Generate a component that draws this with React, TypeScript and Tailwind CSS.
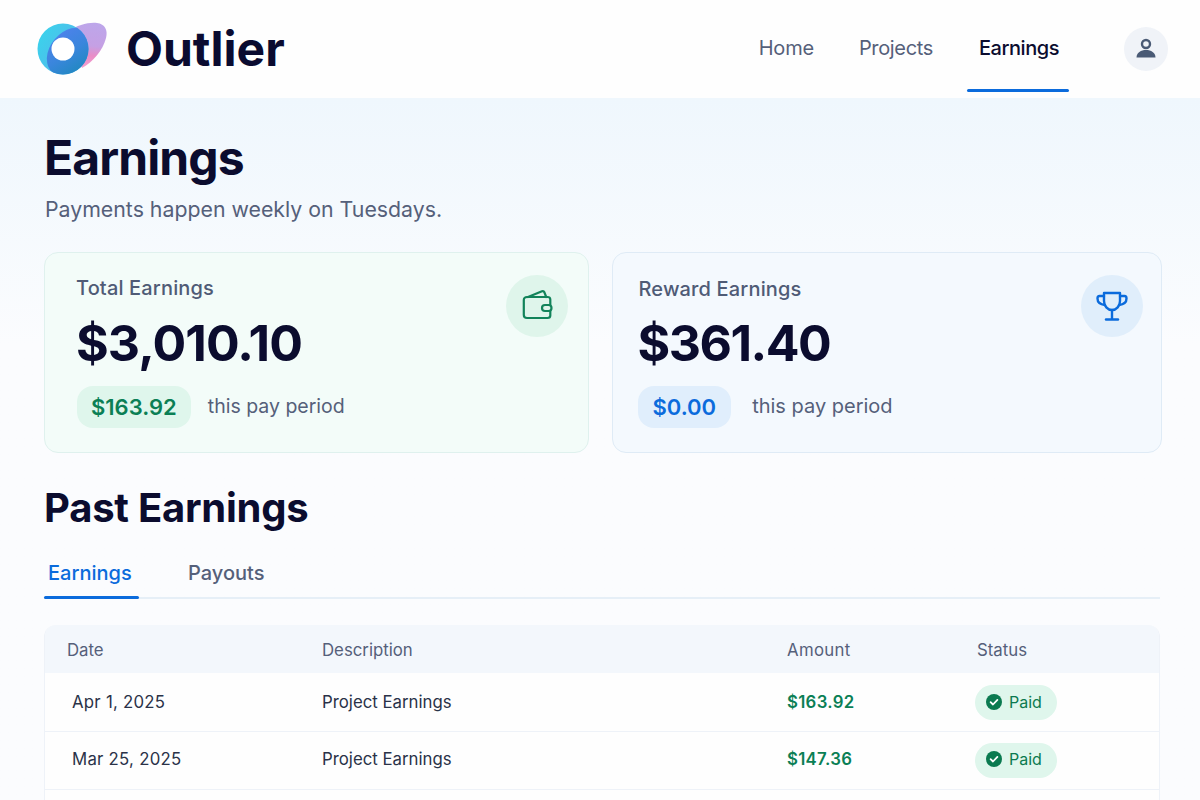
import React from 'react';

const Logo = () => (
  <svg width="72" height="54" viewBox="0 0 72 54" className="shrink-0">
    <defs>
      <linearGradient id="blob" x1="0.55" y1="0" x2="0.45" y2="1">
        <stop offset="0" stopColor="#bda6ea" />
        <stop offset="0.5" stopColor="#c5a0e4" />
        <stop offset="0.72" stopColor="#ea8cc6" />
        <stop offset="1" stopColor="#f4a0cf" />
      </linearGradient>
      <linearGradient id="ring" x1="0" y1="0.2" x2="1" y2="0.8">
        <stop offset="0" stopColor="#3ad3ec" />
        <stop offset="0.6" stopColor="#50bcea" />
        <stop offset="1" stopColor="#4ba6e4" />
      </linearGradient>
      <linearGradient id="overlap" x1="0.7" y1="0" x2="0.3" y2="1">
        <stop offset="0" stopColor="#4c82ea" />
        <stop offset="0.5" stopColor="#3a86dc" />
        <stop offset="1" stopColor="#2088c0" />
      </linearGradient>
      <clipPath id="disc">
        <circle cx="26" cy="27" r="25.5" />
      </clipPath>
    </defs>
    <path d="M32 9 C40 3 52 0 60 1 C68 2 71 8 69 16 C66 28 56 40 45 46 Z" fill="url(#blob)" />
    <circle cx="26" cy="27" r="25.5" fill="url(#ring)" />
    <g clipPath="url(#disc)">
      <ellipse cx="33" cy="30" rx="27" ry="20" transform="rotate(-50 33 30)" fill="url(#overlap)" />
    </g>
    <circle cx="26" cy="27" r="11.5" fill="#ffffff" />
  </svg>
);

const UserIcon = () => (
  <svg width="22" height="22" viewBox="0 0 22 22" fill="none">
    <circle cx="11" cy="6" r="4" stroke="#4a5a75" strokeWidth="2.4" />
    <path d="M1.5 19.5 C1.5 14.5 6 12 11 12 C16 12 20.5 14.5 20.5 19.5 Z" fill="#4a5a75" />
  </svg>
);

const WalletIcon = () => (
  <svg width="32" height="32" viewBox="0 0 32 32" fill="none" stroke="#12835a" strokeWidth="2.2" strokeLinecap="round" strokeLinejoin="round">
    <path d="M7 7 L21 1.3 C22.2 0.9 23 1.4 23.4 2.3 L25.2 7" />
    <path d="M29.3 15 V9.5 C29.3 8 28.2 7 26.5 7 H6 C4.2 7 2.8 8 2.8 10 V25 C2.8 26.8 4 28 6 28 H26.5 C28.2 28 29.3 27.2 29.3 25.5 V21" />
    <rect x="21" y="15" width="9.5" height="6" rx="3" />
  </svg>
);

const TrophyIcon = () => (
  <svg width="32" height="32" viewBox="0 0 32 32" fill="none" stroke="#0b6bdc" strokeWidth="2.4" strokeLinecap="round" strokeLinejoin="round">
    <path d="M8 3 H24 V11 C24 16 20.5 20 16 20 C11.5 20 8 16 8 11 Z" />
    <path d="M8 6 H3.5 C1.8 6 1.5 7.5 1.5 8.5 C1.5 12 4.5 14.5 9 15" />
    <path d="M24 6 H28.5 C30.2 6 30.5 7.5 30.5 8.5 C30.5 12 27.5 14.5 23 15" />
    <path d="M16 20 V28.5" />
    <path d="M10 29.5 H22" />
  </svg>
);

const CheckBadge = () => (
  <svg width="16" height="16" viewBox="0 0 16 16">
    <circle cx="8" cy="8" r="8" fill="#0b7a50" />
    <path d="M4.6 8.2 L7 10.5 L11.4 5.9" fill="none" stroke="#ffffff" strokeWidth="1.8" strokeLinecap="round" strokeLinejoin="round" />
  </svg>
);

const rows = [
  { date: 'Apr 1, 2025', description: 'Project Earnings', amount: '$163.92', cls: 'h-[59px] pt-[1px]' },
  { date: 'Mar 25, 2025', description: 'Project Earnings', amount: '$147.36', cls: 'h-[58px] pb-[1px]' },
];

const App = () => {
  return (
    <div className="h-[800px] w-[1200px] overflow-hidden bg-[#fdfdfe] font-['Inter',sans-serif] text-[#0b0c2e]">
      <header className="flex h-[98px] items-center bg-[#fefefe] pl-[37px] pr-[32px]">
        <div className="flex items-center gap-[17px]">
          <Logo />
          <span className="text-[48px] font-bold leading-none text-[#0a0b30]">Outlier</span>
        </div>
        <nav className="ml-auto flex h-full items-stretch gap-[46px] text-[20px] text-[#55607a]">
          <a className="-mr-px flex items-center pb-[2px] tracking-[-0.2px]">Home</a>
          <a className="flex items-center pb-[2px] tracking-[-0.35px]">Projects</a>
          <a className="relative flex items-center pb-[2px] font-medium tracking-[-0.45px] text-[#0b0c2e]">
            Earnings
            <span className="absolute bottom-[6px] -left-3 -right-[10px] h-[3px] rounded-full bg-[#0b6bdc]" />
          </a>
        </nav>
        <div className="ml-[65px] flex h-11 w-11 items-center justify-center rounded-full bg-[#f0f3f8]">
          <UserIcon />
        </div>
      </header>

      <main className="h-[702px] bg-gradient-to-b from-[#eff7fd] to-[#fbfcfe] to-35% pl-[44px] pr-[38px]">
        <div className="pt-[28px]">
          <h1 className="text-[48px] font-bold leading-[64px] tracking-[-0.9px]">Earnings</h1>
          <p className="mt-[3px] pl-[1px] text-[21.3px] leading-[32px] text-[#55607a]">Payments happen weekly on Tuesdays.</p>
        </div>

        <div className="mt-[27px] flex gap-[23px]">
          <section className="relative h-[201px] w-[545px] rounded-[14px] border border-[#dff1ee] bg-[#f3fcf9] pl-[32px] pt-[21px]">
            <div className="-ml-px text-[20px] font-medium leading-[28px] tracking-[0.15px] text-[#4f5b76]">Total Earnings</div>
            <div className="-ml-px mt-[11px] text-[50px] font-bold leading-[60px] tracking-[-0.9px]">$3,010.10</div>
            <div className="mt-[13px] flex items-center gap-[17px]">
              <span className="flex h-[42px] items-center rounded-[16px] bg-[#dff6ec] px-[14px] text-[22px] font-semibold text-[#0b7f55]">$163.92</span>
              <span className="text-[19.5px] text-[#55607a]">this pay period</span>
            </div>
            <div className="absolute right-[20px] top-[22px] flex h-[62px] w-[62px] items-center justify-center rounded-full bg-[#dff5eb]">
              <WalletIcon />
            </div>
          </section>

          <section className="relative h-[201px] w-[551px] rounded-[14px] border border-[#dfebf6] bg-[#f4f9fe] pl-[26px] pt-[22px]">
            <div className="text-[20px] font-medium leading-[28px] tracking-[0.15px] text-[#4f5b76]">Reward Earnings</div>
            <div className="-ml-px mt-[10px] text-[50px] font-bold leading-[60px] tracking-[-1.5px]">$361.40</div>
            <div className="-ml-px mt-[13px] flex items-center gap-[21px]">
              <span className="flex h-[42px] items-center rounded-[16px] bg-[#e0eefc] px-[15px] text-[22px] font-semibold text-[#0b6bdc]">$0.00</span>
              <span className="-mt-[2px] text-[20px] text-[#55607a]">this pay period</span>
            </div>
            <div className="absolute right-[18px] top-[22px] flex h-[62px] w-[62px] items-center justify-center rounded-full bg-[#e0eefb]">
              <TrophyIcon />
            </div>
          </section>
        </div>

        <h2 className="mt-[28px] text-[40px] font-bold leading-[54px] tracking-[-0.25px]">Past Earnings</h2>

        <div className="mt-[24px] flex w-[1116px] gap-[42px] border-b-2 border-[#e6eff7] text-[20px] font-medium">
          <div className="relative -mb-[2px] w-[95px] pb-[10px] pl-[4px] leading-[28px] text-[#0b6bdc]">
            Earnings
            <span className="absolute bottom-0 left-0 right-0 h-[3px] rounded-full bg-[#0b6bdc]" />
          </div>
          <div className="pb-[10px] pl-[7px] leading-[28px] text-[#55607a]">Payouts</div>
        </div>

        <div className="mt-[26px] w-[1116px] overflow-hidden rounded-t-[12px] border-x border-[#eef2f8]">
          <div className="grid h-[48px] grid-cols-[277px_465px_190px_1fr] items-center bg-[#f3f7fc] pt-[3px] text-[16.8px] text-[#55607a]">
            <div className="pl-[22px]">Date</div>
            <div>Description</div>
            <div className="tracking-[0.3px]">Amount</div>
            <div>Status</div>
          </div>
          {rows.map((row) => (
            <div key={row.date} className={`grid ${row.cls} grid-cols-[277px_465px_190px_1fr] items-center border-b border-[#eef2f8] bg-[#fefefe] text-[16.8px] text-[#2a3248]`}>
              <div className="pl-[27px] tracking-[0.25px]">{row.date}</div>
              <div>{row.description}</div>
              <div className="font-semibold tracking-[0.3px] text-[#0b7f55]">{row.amount}</div>
              <div>
                <span className="-ml-[2px] inline-flex h-[35px] items-center gap-[7px] rounded-full bg-[#dff6ec] pb-[2px] pl-[11px] pr-[15px] text-[16px] text-[#0b7a50]">
                  <CheckBadge />
                  Paid
                </span>
              </div>
            </div>
          ))}
          <div className="h-[60px] bg-[#fefefe]" />
        </div>
      </main>
    </div>
  );
};

export default App;
